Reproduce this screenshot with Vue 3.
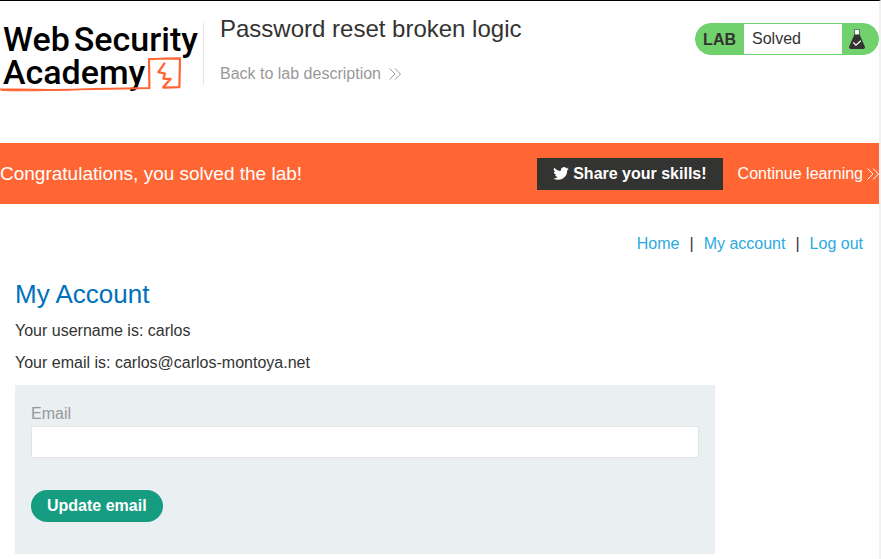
<script setup>
import { ref } from 'vue'

const email = ref('')
const links = ['Home', 'My account', 'Log out']
</script>

<template>
  <div class="page">
    <header class="header">
      <a class="logo" href="#" aria-label="Web Security Academy">
        <span class="logo-line"><span>Web</span><span>Security</span></span>
        <span class="logo-line">Academy</span>
        <svg class="logo-mark" viewBox="0 0 200 72" aria-hidden="true">
          <g fill="none" stroke="#ff6633" stroke-linecap="round" stroke-linejoin="round">
            <path d="M0 66.3C20 66.4 50 67.4 80 66.4S125 65.4 149 65.2" stroke-width="1.8" />
            <path d="M2 67.4C20 68 45 67.8 70 67" stroke-width="1.2" />
            <path d="M149.4 65.2L149 36C160 35.8 170 35.4 180 35.4L179.4 64.2L163.4 64.6" stroke-width="2.2" />
            <path d="M164.4 40.4L158.4 49.2L165 50.6L163.4 55.6L170.6 56L163.4 64" stroke-width="2.3" />
          </g>
        </svg>
      </a>
      <div class="title">
        <h1>Password reset broken logic</h1>
        <a class="back" href="#">
          <span>Back to lab description</span>
          <svg class="chevrons" viewBox="0 0 12 12" aria-hidden="true">
            <path d="M0.5 0.5L6 6L0.5 11.5M6 0.5L11.5 6L6 11.5" />
          </svg>
        </a>
      </div>
      <div class="status">
        <span class="status-lab">LAB</span>
        <span class="status-text">Solved</span>
        <span class="status-icon">
          <svg viewBox="0 0 16 20" aria-hidden="true">
            <path d="M5 0.5H11V1.6H10V6H6V1.6H5Z" fill="#fff" />
            <path d="M5 0.5H11M5.6 1V6M10.4 1V6" stroke="#333332" stroke-width="0.6" fill="none" />
            <path d="M5.4 5.6H10.6L15.8 17.6Q16.4 19.8 14.2 20H1.8Q-0.4 19.8 0.2 17.6Z" fill="#333332" />
            <path d="M4.2 13.4L7 16.2L11.8 11.8" stroke="#fff" stroke-width="1.3" fill="none" />
          </svg>
        </span>
      </div>
    </header>

    <section class="banner">
      <p>Congratulations, you solved the lab!</p>
      <button class="share" type="button">
        <svg viewBox="0 0 24 20" aria-hidden="true">
          <path d="M23.95 2.57a10 10 0 0 1-2.82.77 4.96 4.96 0 0 0 2.16-2.72c-.95.55-2 .95-3.13 1.18a4.92 4.92 0 0 0-8.38 4.48C7.69 6.1 4.07 4.13 1.64 1.16a4.93 4.93 0 0 0 1.52 6.57 4.9 4.9 0 0 1-2.23-.61v.06a4.92 4.92 0 0 0 3.95 4.83 5 5 0 0 1-2.21.08 4.94 4.94 0 0 0 4.6 3.42A9.87 9.87 0 0 1 0 17.54a14 14 0 0 0 7.55 2.21c9.05 0 14-7.5 14-13.98l-.02-.64a10 10 0 0 0 2.42-2.56z" fill="#fff" />
        </svg>
        <span>Share your skills!</span>
      </button>
      <a class="continue" href="#">
        <span>Continue learning</span>
        <svg class="chevrons" viewBox="0 0 12 12" aria-hidden="true">
          <path d="M0.5 0.5L6 6L0.5 11.5M6 0.5L11.5 6L6 11.5" />
        </svg>
      </a>
    </section>

    <nav class="nav">
      <template v-for="(link, i) in links" :key="link">
        <span v-if="i">|</span>
        <a href="#">{{ link }}</a>
      </template>
    </nav>

    <main class="account">
      <h2>My Account</h2>
      <p>Your username is: carlos</p>
      <p>Your email is: carlos@carlos-montoya.net</p>
      <form class="form" @submit.prevent>
        <label for="email">Email</label>
        <input id="email" v-model="email" type="email" />
        <button type="submit">Update email</button>
      </form>
    </main>
  </div>
</template>

<style>
body {
  background: #fff;
}
</style>

<style scoped>
.page {
  box-sizing: border-box;
  min-height: 100vh;
  border-top: 1px solid #000;
  border-right: 2px solid #f0f0f0;
  font-family: "Liberation Sans", Arial, sans-serif;
  font-size: 16px;
  line-height: 20px;
  color: #333332;
}

a {
  text-decoration: none;
}

h1,
h2,
p {
  margin: 0;
  font-weight: 400;
}

.header {
  display: flex;
  align-items: flex-start;
  padding: 22px 0 58px;
}

.logo {
  position: relative;
  box-sizing: border-box;
  width: 204px;
  height: 62px;
  padding-left: 3px;
  border-right: 1px solid #e4e4e4;
  color: #000;
  font-family: Roboto, sans-serif;
  font-size: 34px;
  font-weight: 500;
  line-height: 33px;
}

.logo-line {
  display: flex;
  gap: 4px;
}

.logo-mark {
  position: absolute;
  left: 0;
  top: 0;
  width: 200px;
  height: 72px;
}

.title {
  flex: 1;
  padding-left: 16px;
}

h1 {
  font-size: 24px;
  line-height: 28px;
  margin: -8px 0 21px;
}

.back {
  display: inline-flex;
  align-items: center;
  gap: 8px;
  color: #999;
}

.chevrons {
  width: 12px;
  height: 12px;
  fill: none;
  stroke: currentColor;
  stroke-width: 1;
}

.status {
  display: flex;
  box-sizing: border-box;
  height: 32px;
  border: 1px solid #70d16d;
  border-radius: 16px;
  background: #70d16d;
  line-height: 30px;
}

.status-lab {
  padding: 0 8px 0 7px;
  font-weight: 700;
  line-height: 32px;
}

.status-text {
  box-sizing: border-box;
  width: 98px;
  padding-left: 8px;
  background: #fff;
}

.status-icon {
  display: flex;
  align-items: center;
  padding: 0 13px 0 7px;
}

.status-icon svg {
  width: 16px;
  height: 20px;
}

.banner {
  display: flex;
  align-items: center;
  height: 61px;
  background: #ff6633;
  color: #fff;
}

.banner p {
  flex: 1;
  font-size: 19px;
}

button {
  border: 0;
  height: 32px;
  padding: 0 16px;
  color: #fff;
  font: inherit;
  font-weight: 700;
}

.share {
  display: flex;
  align-items: center;
  gap: 4px;
  margin-right: 15px;
  background: #333332;
}

.share svg {
  width: 16px;
  height: 13px;
}

.continue {
  display: flex;
  align-items: center;
  gap: 4px;
  color: #fff;
}

.nav {
  display: flex;
  justify-content: flex-end;
  gap: 10px;
  padding: 30px 16px 0;
}

.nav a {
  color: #29abe2;
}

.account {
  padding: 25px 15px 0;
}

h2 {
  margin-bottom: 12px;
  color: #0071bc;
  font-size: 26px;
  line-height: 30px;
}

.account p {
  margin-bottom: 12px;
}

.form {
  box-sizing: border-box;
  display: flex;
  flex-direction: column;
  align-items: flex-start;
  max-width: 700px;
  padding: 19px 16px 32px;
  background: #eaeff2;
}

.form label {
  margin-bottom: 2px;
  color: #999;
}

.form input {
  box-sizing: border-box;
  width: 100%;
  height: 32px;
  padding: 0 8px;
  border: 1px solid #e4e4e4;
  background: #fff;
  font: inherit;
}

.form button {
  margin-top: 32px;
  border-radius: 16px;
  background: #169c80;
}
</style>
